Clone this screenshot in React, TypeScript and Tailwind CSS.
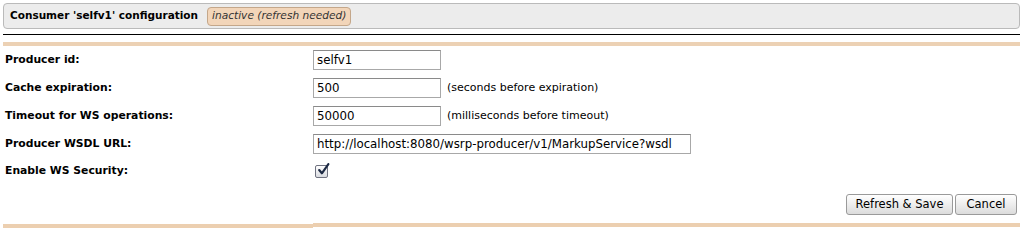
export default function App() {
  const rows = [
    { label: 'Producer id:', value: 'selfv1', width: 'w-[128px]', hint: '' },
    { label: 'Cache expiration:', value: '500', width: 'w-[128px]', hint: '(seconds before expiration)' },
    { label: 'Timeout for WS operations:', value: '50000', width: 'w-[128px]', hint: '(milliseconds before timeout)' },
    { label: 'Producer WSDL URL:', value: 'http://localhost:8080/wsrp-producer/v1/MarkupService?wsdl', width: 'w-[378px]', hint: '' },
  ];

  return (
    <div className="w-[1023px] h-[231px] bg-white text-[11px] text-black font-['DejaVu_Sans',Verdana,sans-serif] overflow-hidden">
      {/* header */}
      <div className="mx-[3px] pt-[3px]">
        <div className="h-[26px] bg-[#ececec] border border-[#bababa] rounded-[4px] flex items-center pl-[6px]">
          <span className="font-bold text-[10.5px]">Consumer 'selfv1' configuration</span>
          <span className="ml-[9px] h-[19px] px-[4px] flex items-center bg-[#f2d5b9] border border-[#c4a78a] rounded-[4px] italic text-[10.6px] text-[#333]">
            inactive (refresh needed)
          </span>
        </div>
        <div className="mt-[5px] h-[1px] bg-black" />
        <div className="mt-[7px] h-[4px] bg-[#ecd1b4]" />
      </div>

      {/* form */}
      <div className="mx-[3px]">
        {rows.map((r) => (
          <div key={r.label} className="h-[28px] flex items-center">
            <div className="w-[310px] pl-[2px] font-bold text-[10.8px]">{r.label}</div>
            <input
              readOnly
              value={r.value}
              className={`${r.width} h-[20px] px-[3px] bg-white border border-[#a8a8a8] border-t-[#8a8a8a] text-[11.8px] outline-none`}
            />
            {r.hint && <span className="ml-[6px]">{r.hint}</span>}
          </div>
        ))}
        <div className="h-[26px] flex items-center">
          <div className="w-[310px] pl-[2px] font-bold text-[10.8px]">Enable WS Security:</div>
          <div className="ml-[2px] w-[13px] h-[13px] rounded-[2px] border border-[#6f7280] bg-gradient-to-b from-white to-[#d9dbe0] relative">
            <svg viewBox="0 0 12 12" className="absolute left-[1px] -top-[3px] w-[13px] h-[13px]">
              <path d="M2 6.5 L4.5 9.5 L10.5 1" fill="none" stroke="#1d2a44" strokeWidth="2" strokeLinecap="round" strokeLinejoin="round" />
            </svg>
          </div>
        </div>
        <div className="h-[39px] flex items-start justify-end pt-[10px] pr-[3px] gap-[2px]">
          <button className="w-[107px] h-[21px] rounded-[3px] border border-[#9a9a9a] bg-gradient-to-b from-white to-[#dcdcdc] text-[11.5px]">
            Refresh &amp; Save
          </button>
          <button className="w-[62px] h-[21px] rounded-[3px] border border-[#9a9a9a] bg-gradient-to-b from-white to-[#dcdcdc] text-[11.5px]">
            Cancel
          </button>
        </div>
        <div className="flex">
          <div className="w-[310px] h-[4px] mt-[1px] bg-[#eccfb0]" />
          <div className="flex-1 h-[4px] bg-[#eccfb0]" />
        </div>
      </div>
    </div>
  );
}
